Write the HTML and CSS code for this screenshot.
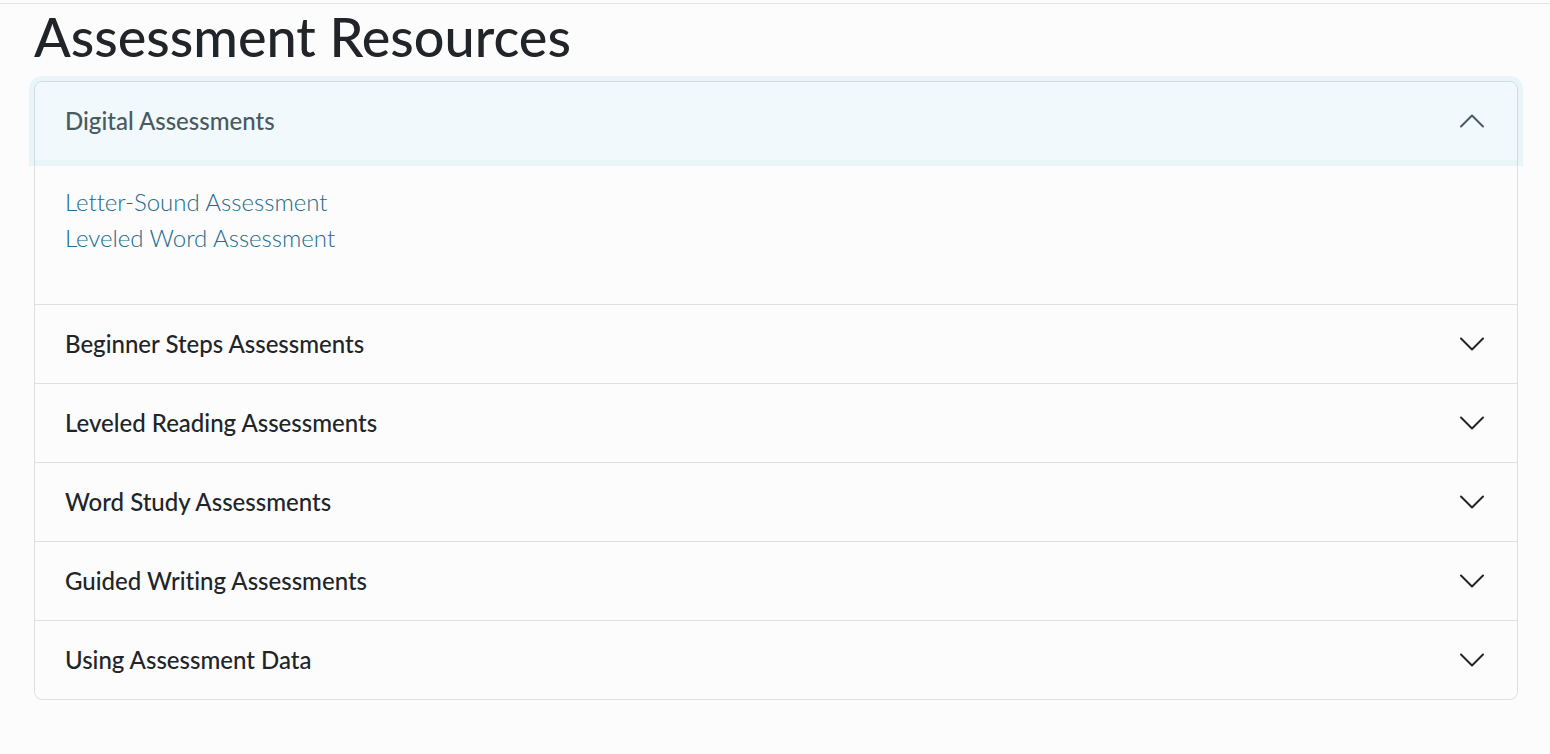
FILE: index.html
```html
<!DOCTYPE html>
<html lang="en">
<head>
<meta charset="utf-8">
<meta name="viewport" content="width=device-width, initial-scale=1">
<title>Assessment Resources</title>
<link rel="stylesheet" href="styles.css">
</head>
<body>
<main class="page">
  <h1 class="title">Assessment Resources</h1>
  <div class="accordion">
    <section class="item">
      <h2 class="heading"><button class="toggle open" type="button" aria-expanded="true" aria-controls="digital">Digital Assessments<svg class="chevron" viewBox="0 0 26 16" aria-hidden="true"><path d="M2 13.5l11-11 11 11"/></svg></button></h2>
      <div class="panel" id="digital">
        <a class="link" href="#letter-sound">Letter-Sound Assessment</a>
        <a class="link" href="#leveled-word">Leveled Word Assessment</a>
      </div>
    </section>
    <section class="item">
      <h2 class="heading"><button class="toggle" type="button" aria-expanded="false">Beginner Steps Assessments<svg class="chevron" viewBox="0 0 26 16" aria-hidden="true"><path d="M2 2.5l11 11 11-11"/></svg></button></h2>
    </section>
    <section class="item">
      <h2 class="heading"><button class="toggle" type="button" aria-expanded="false">Leveled Reading Assessments<svg class="chevron" viewBox="0 0 26 16" aria-hidden="true"><path d="M2 2.5l11 11 11-11"/></svg></button></h2>
    </section>
    <section class="item">
      <h2 class="heading"><button class="toggle" type="button" aria-expanded="false">Word Study Assessments<svg class="chevron" viewBox="0 0 26 16" aria-hidden="true"><path d="M2 2.5l11 11 11-11"/></svg></button></h2>
    </section>
    <section class="item">
      <h2 class="heading"><button class="toggle" type="button" aria-expanded="false">Guided Writing Assessments<svg class="chevron" viewBox="0 0 26 16" aria-hidden="true"><path d="M2 2.5l11 11 11-11"/></svg></button></h2>
    </section>
    <section class="item">
      <h2 class="heading"><button class="toggle" type="button" aria-expanded="false">Using Assessment Data<svg class="chevron" viewBox="0 0 26 16" aria-hidden="true"><path d="M2 2.5l11 11 11-11"/></svg></button></h2>
    </section>
  </div>
</main>
</body>
</html>
```
FILE: styles.css
```css
* { box-sizing: border-box; }
body {
  margin: 0;
  padding-top: 3px;
  background: #fcfcfc;
  color: #212529;
  font-family: Lato, "Liberation Sans", sans-serif;
  font-size: 24px;
  font-variant-ligatures: none;
}
.page {
  padding: 1px 32px 40px 34px;
  border-top: 1px solid #e4e4e4;
}
.title {
  margin: 0 0 12px;
  font-size: 54px;
  font-weight: 500;
  line-height: 64px;
}
.accordion {
  border: 1px solid #dedfe1;
  border-radius: 8px;
}
.item + .item { border-top: 1px solid #dedfe1; }
.heading { margin: 0; font-size: inherit; }
.toggle {
  display: flex;
  align-items: center;
  justify-content: space-between;
  width: 100%;
  padding: 21px 32px 21px 30px;
  border: 0;
  border-radius: 7px;
  background: transparent;
  color: #212529;
  font: 500 24px/36px Lato, "Liberation Sans", sans-serif;
  font-variant-ligatures: none;
  text-align: left;
}
.toggle.open {
  border-radius: 7px 7px 0 0;
  background: #f1f9fc;
  color: #4a5a5f;
  box-shadow: 0 0 0 6px rgba(125, 205, 225, 0.15);
}
.chevron {
  width: 26px;
  height: 16px;
  fill: none;
  stroke: currentColor;
  stroke-width: 2;
  stroke-linecap: round;
  stroke-linejoin: round;
}
.panel {
  display: flex;
  flex-direction: column;
  align-items: flex-start;
  padding: 24px 30px 48px;
}
.link {
  color: #216a8b;
  font-weight: 300;
  line-height: 36px;
  text-decoration: none;
}
```
